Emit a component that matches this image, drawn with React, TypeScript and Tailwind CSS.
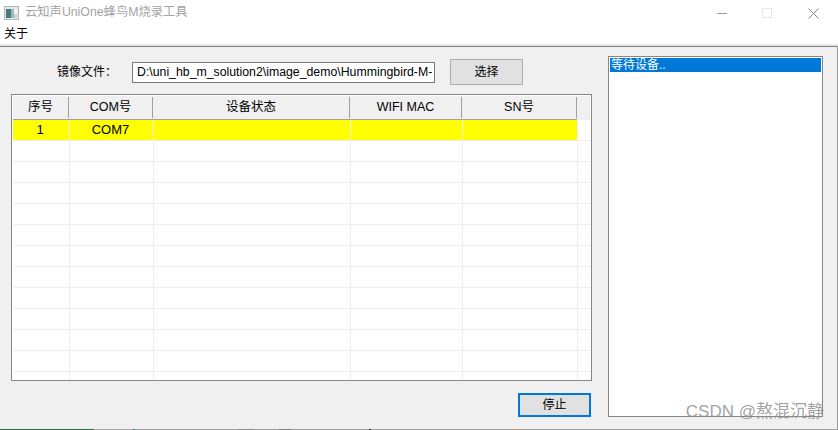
const font = "font-['Liberation_Sans','Noto_Sans_CJK_SC',sans-serif]";

const columns = [
  { title: "序号", value: "1" },
  { title: "COM号", value: "COM7" },
  { title: "设备状态", value: "" },
  { title: "WIFI MAC", value: "" },
  { title: "SN号", value: "" },
];

const headerCols = "grid grid-cols-[56px_84px_197px_112px_115px]";
const rowCols = "grid grid-cols-[57px_84px_197px_112px_115px]";
const emptyRows = Array.from({ length: 12 }, (_, i) => i);
const bottomStrip = [
  "w-[94px] bg-[#217346]",
  "w-[39px] bg-[#a8a8a8]",
  "w-[2px] bg-[#2f7fb5]",
  "w-[103px] bg-[#a0a0a0]",
  "w-[16px] bg-[#8f8f8f]",
  "w-[25px] bg-[#a0a0a0]",
  "w-[12px] bg-[#7d7d7d]",
  "w-[78px] bg-[#a0a0a0]",
  "w-[2px] bg-[#222222]",
  "flex-1 bg-[#a0a0a0]",
];

function AppIcon() {
  return (
    <svg width="15" height="14" viewBox="0 0 15 14">
      <rect x="0.5" y="0.5" width="14" height="13" fill="#e4e8e8" stroke="#b4b8b8" />
      <rect x="2" y="3" width="5" height="9" fill="#3f7f78" />
      <rect x="7" y="3" width="3" height="9" fill="#9fb4c4" />
      <rect x="10" y="3" width="3" height="5" fill="#f4f6f6" />
      <rect x="10" y="8" width="3" height="4" fill="#c7d0d6" />
    </svg>
  );
}

function TitleBar() {
  return (
    <div className="flex h-[22px] items-center bg-white">
      <div className="ml-1 flex w-[21px] shrink-0 pt-[3px]">
        <AppIcon />
      </div>
      <span className="pt-[3px] text-[12.3px] text-[#a3a3a3]">云知声UniOne蜂鸟M烧录工具</span>
      <div className="ml-auto flex items-center pt-[4px]">
        <svg width="10" height="10" viewBox="0 0 10 10" className="mr-[35px]">
          <path d="M0 5.5H10" stroke="#9a9a9a" />
        </svg>
        <svg width="10" height="10" viewBox="0 0 10 10" className="mr-[36px]">
          <rect x="0.5" y="0.5" width="9" height="9" fill="none" stroke="#e6e6e6" />
        </svg>
        <svg width="11" height="11" viewBox="0 0 11 11" className="mr-[19px]">
          <path d="M0.5 0.5L10.5 10.5M10.5 0.5L0.5 10.5" stroke="#8c8c8c" />
        </svg>
      </div>
    </div>
  );
}

function DeviceTable() {
  return (
    <div className="mt-[9px] h-[287px] overflow-hidden border border-[#85878c] bg-white p-px">
      <div className="h-[24px] bg-[#f0f0f0]">
        <div className={headerCols}>
          {columns.map((col) => (
            <div key={col.title} className="flex h-[24px] items-center border-b border-[#a0a0a0]">
              <span className="flex h-[21px] w-full items-center justify-center border-r border-[#a0a0a0] text-[12.5px] text-black">
                {col.title}
              </span>
            </div>
          ))}
        </div>
      </div>
      <div className={`${rowCols} h-[21px] border-b border-[#eeeeee]`}>
        {columns.map((col) => (
          <div
            key={col.title}
            className="flex h-[20px] items-center justify-center border-r border-[#f0f0f0] bg-[#ffff00] pr-[2px] text-[13px] text-black"
          >
            {col.value}
          </div>
        ))}
      </div>
      {emptyRows.map((row) => (
        <div key={row} className={`${rowCols} h-[21px] border-b border-[#eeeeee]`}>
          {columns.map((col) => (
            <div key={col.title} className="border-r border-[#eeeeee]" />
          ))}
        </div>
      ))}
    </div>
  );
}

export default function App() {
  return (
    <div className={`relative flex h-[430px] w-[838px] flex-col overflow-hidden bg-white ${font}`}>
      <TitleBar />
      <div className="flex h-[22px] items-start pl-1 pt-[4px] text-[12px] leading-[17px] text-black">关于</div>
      <div className="h-[2px] bg-[#e6e6e6]" />
      <div className="h-px bg-[#7f7f7f]" />
      <div className="flex flex-1 bg-[#f0f0f0] pl-[11px] pr-[14px]">
        <div className="w-[581px] shrink-0 pt-[12px]">
          <div className="flex h-[26px] items-center pl-[46px]">
            <span className="w-[75px] text-[12px] text-black">镜像文件：</span>
            <div className="flex h-[21px] w-[303px] items-center whitespace-nowrap border border-[#7a7a7a] bg-white pl-[4px] text-[12.3px] text-black">
              D:\uni_hb_m_solution2\image_demo\Hummingbird-M-
            </div>
            <button className="ml-[15px] h-[26px] w-[73px] border border-[#adadad] bg-[#e1e1e1] text-[12px] text-black">
              选择
            </button>
          </div>
          <DeviceTable />
          <div className="mt-[12px] flex justify-end pr-px">
            <button className="h-[24px] w-[73px] border-2 border-[#0078d7] bg-[#e1e1e1] text-[12px] text-black">
              停止
            </button>
          </div>
        </div>
        <div className="ml-[16px] mt-[9px] h-[361px] w-[215px] shrink-0 border border-[#85878c] bg-white p-px">
          <div className="flex h-[14px] items-center bg-[#0078d7] pl-px text-[12px] text-white">等待设备..</div>
        </div>
      </div>
      <div className="flex h-px">
        {bottomStrip.map((segment) => (
          <div key={segment} className={segment} />
        ))}
      </div>
      <div className="absolute bottom-0 right-0 top-[46px] w-px bg-[#9a9a9a]" />
      <div className="absolute bottom-[8px] right-[14px] text-[17px] leading-[20px] text-[#8a8a8a]/80">CSDN @熬混沉静</div>
    </div>
  );
}
